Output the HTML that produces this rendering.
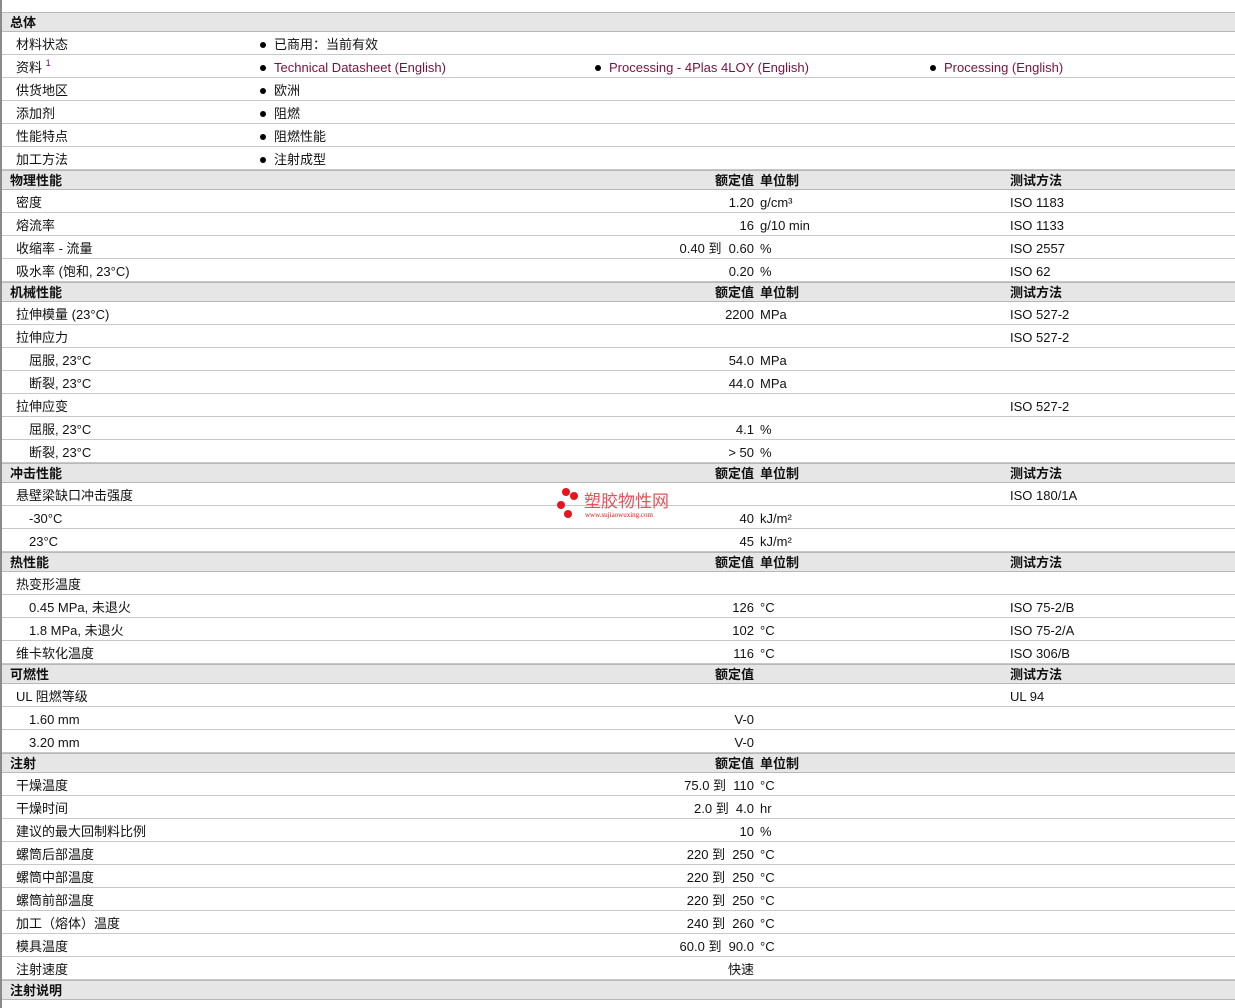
<!DOCTYPE html>
<html><head><meta charset="utf-8"><style>
body{margin:0;width:1235px;height:1008px;overflow:hidden;background:#fff;font-family:"Liberation Sans","Noto Sans CJK SC",sans-serif;font-size:13px;color:#111;position:relative}
#lb{position:absolute;left:0;top:0;width:2px;height:1008px;background:#8a8a8a}
#t{position:absolute;left:2px;top:12px;width:1233px}
.r{position:relative;height:23px;border-bottom:1px solid #c8c8c8;box-sizing:border-box;line-height:25px;white-space:nowrap}
.h{position:relative;height:20px;background:#e6e6e6;border-top:1px solid #b8b8b8;border-bottom:1px solid #b8b8b8;box-sizing:border-box;line-height:19px;font-weight:bold;white-space:nowrap}
.r span,.h span{position:absolute;top:0}
.l{left:14px}.s{left:27px}.hl{left:8px}
.v{right:481px;text-align:right}
.u{left:758px}.m{left:1008px}
.b1{left:258px}.b2{left:593px}.b3{left:928px}
.dot{display:inline-block;width:6px;height:6px;border-radius:50%;background:#000;margin-right:8px;vertical-align:1px}
a{color:#7a1040;text-decoration:none}
sup{font-size:9px;color:#5a0a6a;line-height:0;vertical-align:6px}
#wm{position:absolute;left:553px;top:486px;width:140px;height:36px}
</style></head><body>
<div id="lb"></div>
<div id="t">
<div class="h"><span class="hl">总体</span></div>
<div class="r"><span class="l">材料状态</span><span class="b1"><i class="dot"></i>已商用：当前有效</span></div>
<div class="r"><span class="l">资料 <sup>1</sup></span><span class="b1"><i class="dot"></i><a>Technical Datasheet (English)</a></span><span class="b2"><i class="dot"></i><a>Processing - 4Plas 4LOY (English)</a></span><span class="b3"><i class="dot"></i><a>Processing (English)</a></span></div>
<div class="r"><span class="l">供货地区</span><span class="b1"><i class="dot"></i>欧洲</span></div>
<div class="r"><span class="l">添加剂</span><span class="b1"><i class="dot"></i>阻燃</span></div>
<div class="r"><span class="l">性能特点</span><span class="b1"><i class="dot"></i>阻燃性能</span></div>
<div class="r"><span class="l">加工方法</span><span class="b1"><i class="dot"></i>注射成型</span></div>
<div class="h"><span class="hl">物理性能</span><span class="v">额定值</span><span class="u">单位制</span><span class="m">测试方法</span></div>
<div class="r"><span class="l">密度</span><span class="v">1.20</span><span class="u">g/cm³</span><span class="m">ISO 1183</span></div>
<div class="r"><span class="l">熔流率</span><span class="v">16</span><span class="u">g/10 min</span><span class="m">ISO 1133</span></div>
<div class="r"><span class="l">收缩率 - 流量</span><span class="v">0.40 到&nbsp; 0.60</span><span class="u">%</span><span class="m">ISO 2557</span></div>
<div class="r"><span class="l">吸水率 (饱和, 23°C)</span><span class="v">0.20</span><span class="u">%</span><span class="m">ISO 62</span></div>
<div class="h"><span class="hl">机械性能</span><span class="v">额定值</span><span class="u">单位制</span><span class="m">测试方法</span></div>
<div class="r"><span class="l">拉伸模量 (23°C)</span><span class="v">2200</span><span class="u">MPa</span><span class="m">ISO 527-2</span></div>
<div class="r"><span class="l">拉伸应力</span><span class="m">ISO 527-2</span></div>
<div class="r"><span class="s">屈服, 23°C</span><span class="v">54.0</span><span class="u">MPa</span></div>
<div class="r"><span class="s">断裂, 23°C</span><span class="v">44.0</span><span class="u">MPa</span></div>
<div class="r"><span class="l">拉伸应变</span><span class="m">ISO 527-2</span></div>
<div class="r"><span class="s">屈服, 23°C</span><span class="v">4.1</span><span class="u">%</span></div>
<div class="r"><span class="s">断裂, 23°C</span><span class="v">&gt; 50</span><span class="u">%</span></div>
<div class="h"><span class="hl">冲击性能</span><span class="v">额定值</span><span class="u">单位制</span><span class="m">测试方法</span></div>
<div class="r"><span class="l">悬壁梁缺口冲击强度</span><span class="m">ISO 180/1A</span></div>
<div class="r"><span class="s">-30°C</span><span class="v">40</span><span class="u">kJ/m²</span></div>
<div class="r"><span class="s">23°C</span><span class="v">45</span><span class="u">kJ/m²</span></div>
<div class="h"><span class="hl">热性能</span><span class="v">额定值</span><span class="u">单位制</span><span class="m">测试方法</span></div>
<div class="r"><span class="l">热变形温度</span></div>
<div class="r"><span class="s">0.45 MPa, 未退火</span><span class="v">126</span><span class="u">°C</span><span class="m">ISO 75-2/B</span></div>
<div class="r"><span class="s">1.8 MPa, 未退火</span><span class="v">102</span><span class="u">°C</span><span class="m">ISO 75-2/A</span></div>
<div class="r"><span class="l">维卡软化温度</span><span class="v">116</span><span class="u">°C</span><span class="m">ISO 306/B</span></div>
<div class="h"><span class="hl">可燃性</span><span class="v">额定值</span><span class="m">测试方法</span></div>
<div class="r"><span class="l">UL 阻燃等级</span><span class="m">UL 94</span></div>
<div class="r"><span class="s">1.60 mm</span><span class="v">V-0</span></div>
<div class="r"><span class="s">3.20 mm</span><span class="v">V-0</span></div>
<div class="h"><span class="hl">注射</span><span class="v">额定值</span><span class="u">单位制</span></div>
<div class="r"><span class="l">干燥温度</span><span class="v">75.0 到&nbsp; 110</span><span class="u">°C</span></div>
<div class="r"><span class="l">干燥时间</span><span class="v">2.0 到&nbsp; 4.0</span><span class="u">hr</span></div>
<div class="r"><span class="l">建议的最大回制料比例</span><span class="v">10</span><span class="u">%</span></div>
<div class="r"><span class="l">螺筒后部温度</span><span class="v">220 到&nbsp; 250</span><span class="u">°C</span></div>
<div class="r"><span class="l">螺筒中部温度</span><span class="v">220 到&nbsp; 250</span><span class="u">°C</span></div>
<div class="r"><span class="l">螺筒前部温度</span><span class="v">220 到&nbsp; 250</span><span class="u">°C</span></div>
<div class="r"><span class="l">加工（熔体）温度</span><span class="v">240 到&nbsp; 260</span><span class="u">°C</span></div>
<div class="r"><span class="l">模具温度</span><span class="v">60.0 到&nbsp; 90.0</span><span class="u">°C</span></div>
<div class="r"><span class="l">注射速度</span><span class="v">快速</span></div>
<div class="h"><span class="hl">注射说明</span></div>
</div>
<svg id="wm" viewBox="0 0 140 36">
<circle cx="13" cy="6" r="4" fill="#e8141c"/><circle cx="21" cy="10" r="4" fill="#e8141c"/>
<circle cx="8" cy="19" r="4" fill="#e8141c"/><circle cx="15" cy="28" r="4" fill="#e8141c"/>
<text x="31" y="21" font-size="17" fill="#e8505a" font-family="Noto Sans CJK SC,sans-serif">塑胶物性网</text>
<text x="32" y="31" font-size="7" fill="#e8141c" font-family="Liberation Serif,serif">www.sujiaowuxing.com</text>
</svg>
</body></html>
